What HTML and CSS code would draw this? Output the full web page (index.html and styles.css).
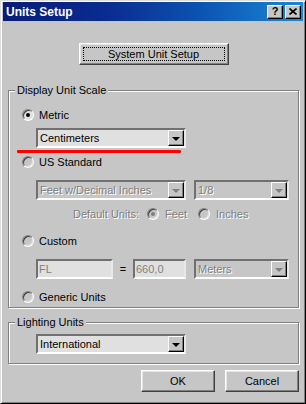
FILE: index.html
```html
<!DOCTYPE html>
<html lang="en">
<head>
    <meta charset="UTF-8">
    <title>Units Setup</title>
    <link rel="stylesheet" href="styles.css">
</head>
<body>

    <div class="window">
        <!-- Title bar -->
        <div class="titlebar">
            <span class="title">Units Setup</span>
            <div class="title-buttons">
                <span class="tbtn help">?</span>
                <span class="tbtn">
                    <svg width="8" height="7" viewBox="0 0 8 7"><path d="M0.5 0.5 L7.5 6.5 M7.5 0.5 L0.5 6.5" stroke="#000" stroke-width="1.6"/></svg>
                </span>
            </div>
        </div>

        <div class="dialog">
            <div class="top-row">
                <div class="btn sys-btn"><span class="focus">System Unit Setup</span></div>
            </div>

            <!-- Display unit scale -->
            <fieldset class="group display-group">
                <legend>Display Unit Scale</legend>

                <div class="option-row row-metric">
                    <span class="radio checked"></span>
                    <span>Metric</span>
                </div>
                <div class="combo combo-wide row-centi">
                    <span class="combo-text">Centimeters</span>
                    <span class="combo-btn"><span class="arrow"></span></span>
                </div>
                <div class="red-mark"></div>

                <div class="option-row row-us">
                    <span class="radio disabled"></span>
                    <span>US Standard</span>
                </div>
                <div class="field-row row-feet">
                    <div class="combo combo-wide disabled">
                        <span class="combo-text">Feet w/Decimal Inches</span>
                        <span class="combo-btn"><span class="arrow"></span></span>
                    </div>
                    <div class="combo combo-small disabled">
                        <span class="combo-text">1/8</span>
                        <span class="combo-btn"><span class="arrow"></span></span>
                    </div>
                </div>
                <div class="default-row dim">
                    <span class="default-label">Default Units:</span>
                    <span class="radio disabled checked"></span>
                    <span class="default-opt">Feet</span>
                    <span class="radio disabled inches-radio"></span>
                    <span class="default-opt">Inches</span>
                </div>

                <div class="option-row row-custom">
                    <span class="radio disabled"></span>
                    <span>Custom</span>
                </div>
                <div class="field-row row-fl">
                    <div class="textbox box-fl">FL</div>
                    <span class="equals">=</span>
                    <div class="textbox box-num">660,0</div>
                    <div class="combo combo-small disabled">
                        <span class="combo-text">Meters</span>
                        <span class="combo-btn"><span class="arrow"></span></span>
                    </div>
                </div>

                <div class="option-row row-generic">
                    <span class="radio disabled"></span>
                    <span>Generic Units</span>
                </div>
            </fieldset>

            <!-- Lighting units -->
            <fieldset class="group lighting-group">
                <legend>Lighting Units</legend>
                <div class="combo combo-wide row-light">
                    <span class="combo-text">International</span>
                    <span class="combo-btn"><span class="arrow"></span></span>
                </div>
            </fieldset>

            <div class="button-row">
                <div class="btn action-btn">OK</div>
                <div class="btn action-btn">Cancel</div>
            </div>
        </div>
    </div>

</body>
</html>
```

FILE: styles.css
```css
/* Basic Reset */
* {
    margin: 0;
    padding: 0;
    box-sizing: border-box;
}

body {
    font-family: 'Liberation Sans', Arial, sans-serif;
    font-size: 11px;
    color: #000;
    background-color: #c6c6c6;
}

/* Window frame */
.window {
    width: 306px;
    height: 404px;
    background-color: #c6c6c6;
    border: 1px solid;
    border-color: #dfdfdf #000 #000 #dfdfdf;
    box-shadow: inset 1px 1px 0 #fff, inset -1px -1px 0 #808080;
    padding: 1px 2px;
    display: flex;
    flex-direction: column;
}

.titlebar {
    height: 19px;
    background: linear-gradient(to right, #081c78, #0a2c90 35%, #0c52b0 65%, #1a88d6);
    display: flex;
    align-items: center;
    justify-content: space-between;
    padding: 0 2px 0 3px;
}

.title {
    color: #fff;
    font-weight: bold;
    font-size: 12px;
}

.title-buttons {
    display: flex;
    gap: 2px;
}

.tbtn {
    width: 16px;
    height: 14px;
    background-color: #c6c6c6;
    border: 1px solid;
    border-color: #fff #000 #000 #fff;
    box-shadow: inset -1px -1px 0 #808080;
    display: flex;
    align-items: center;
    justify-content: center;
    font-weight: bold;
    font-size: 11px;
    line-height: 1;
}

/* Buttons */
.btn {
    background-color: #c6c6c6;
    border: 1px solid;
    border-color: #fff #404040 #404040 #fff;
    box-shadow: inset -1px -1px 0 #808080, inset 1px 1px 0 #e4e4e4;
    display: flex;
    align-items: center;
    justify-content: center;
}

.dialog {
    flex: 1;
    display: flex;
    flex-direction: column;
    padding: 0 4px 0 5px;
}

.top-row {
    margin-top: 22px;
    display: flex;
    justify-content: center;
}

.sys-btn {
    width: 150px;
    height: 22px;
    padding: 3px;
}

.focus {
    width: 100%;
    height: 100%;
    border: 1px dotted #000;
    display: flex;
    align-items: center;
    justify-content: center;
}

/* Group boxes */
.group {
    border: 1px solid #808080;
    box-shadow: inset 1px 1px 0 #fff, 1px 1px 0 #fff;
    padding: 0 0 0 13px;
    display: flex;
    flex-direction: column;
}

.group legend {
    margin-left: -7px;
    padding: 0 2px;
    line-height: 13px;
    background-color: #c6c6c6;
}

.display-group {
    margin-top: 19px;
    padding-bottom: 2px;
}

.lighting-group {
    margin-top: 8px;
    padding-bottom: 9px;
}

/* Radio rows */
.option-row {
    height: 16px;
    display: flex;
    align-items: center;
    gap: 5px;
}

.radio {
    width: 12px;
    height: 12px;
    border-radius: 50%;
    border: 1px solid;
    border-color: #808080 #fff #fff #808080;
    box-shadow: inset 1px 1px 0 #404040, inset -1px -1px 0 #dfdfdf;
    background-color: #e2e2e2;
    display: flex;
    align-items: center;
    justify-content: center;
    flex-shrink: 0;
}

.radio.checked::after {
    content: '';
    width: 4px;
    height: 4px;
    border-radius: 50%;
    background-color: #000;
}

.radio.disabled {
    background-color: #c6c6c6;
}

.radio.disabled.checked::after {
    background-color: #808080;
}

.row-metric { margin-top: 10px; }
.row-us { margin-top: 1px; }
.row-custom { margin-top: 11px; }
.row-generic { margin-top: 10px; }

/* Combo boxes */
.combo {
    height: 20px;
    display: flex;
    align-items: center;
    justify-content: space-between;
    border: 2px solid;
    border-color: #707070 #e8e8e8 #fff #707070;
    background-color: #e0e0e0;
    padding: 0 0 0 2px;
}

.combo-wide {
    width: 150px;
    margin-left: 14px;
}

.combo-small {
    width: 95px;
}

.combo-btn {
    width: 16px;
    height: 16px;
    background-color: #c6c6c6;
    border: 1px solid;
    border-color: #fff #000 #000 #fff;
    box-shadow: inset -1px -1px 0 #808080;
    display: flex;
    align-items: center;
    justify-content: center;
}

.arrow {
    width: 0;
    height: 0;
    border-left: 4px solid transparent;
    border-right: 4px solid transparent;
    border-top: 4px solid #000;
    margin-top: 1px;
}

.combo.disabled {
    background-color: #c6c6c6;
    color: #808080;
    text-shadow: 1px 1px 0 #fff;
}

.combo.disabled .arrow {
    border-top-color: #808080;
}

.row-centi { margin-top: 5px; }
.row-light { margin-top: 5px; }

/* Red annotation stroke */
.red-mark {
    width: 164px;
    height: 3px;
    margin: 2px 0 0 -5px;
    background-color: #f00;
    border-radius: 1px;
}

.field-row {
    display: flex;
    align-items: center;
    margin-left: 14px;
}

.field-row .combo-wide {
    margin-left: 0;
}

.row-feet {
    margin-top: 10px;
    gap: 8px;
}

.row-fl {
    margin-top: 10px;
}

.dim {
    color: #808080;
    text-shadow: 1px 1px 0 #fff;
}

.default-row {
    height: 16px;
    margin-top: 6px;
    display: flex;
    align-items: center;
    padding-left: 51px;
}

.default-label { margin-right: 8px; }
.default-opt { margin-left: 6px; }
.inches-radio { margin-left: 11px; }

/* Text boxes */
.textbox {
    height: 20px;
    border: 2px solid;
    border-color: #707070 #e8e8e8 #fff #707070;
    background-color: #e0e0e0;
    color: #808080;
    display: flex;
    align-items: center;
    padding-left: 1px;
}

.box-fl { width: 77px; }
.box-num { width: 53px; }

.equals {
    width: 20px;
    text-align: center;
}

.row-fl .combo-small {
    margin-left: 8px;
}

/* OK / Cancel */
.button-row {
    margin-top: 6px;
    display: flex;
    justify-content: flex-end;
    gap: 10px;
}

.action-btn {
    width: 74px;
    height: 22px;
}
```
